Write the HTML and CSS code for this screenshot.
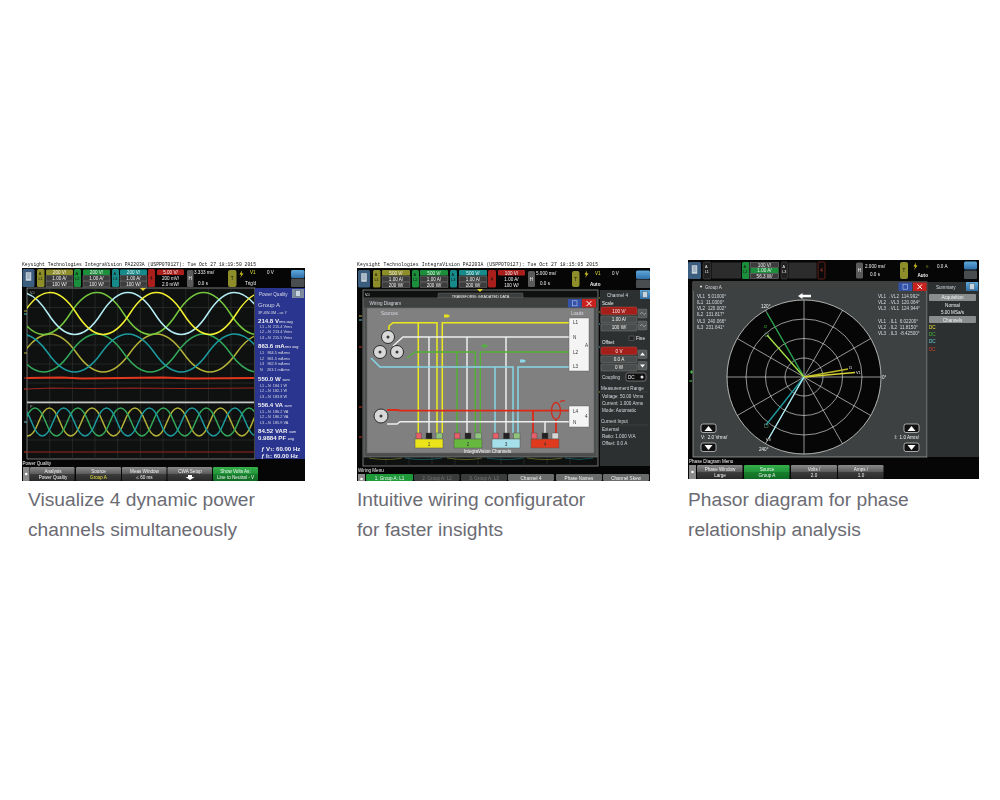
FILE: index.html
```html
<!DOCTYPE html>
<html lang="en">
<head>
<meta charset="utf-8">
<title>Power analysis views</title>
<link rel="stylesheet" href="styles.css">
</head>
<body>
<main class="gallery">

<figure class="card card-a">
<svg class="shot" width="283" height="221" viewBox="0 -2 283 221" xmlns="http://www.w3.org/2000/svg">
<defs>
<linearGradient id="key" x1="0" y1="0" x2="0" y2="1"><stop offset="0" stop-color="#8a8a8a"/><stop offset=".48" stop-color="#5c5c5c"/><stop offset=".52" stop-color="#3c3c3c"/><stop offset="1" stop-color="#2a2a2a"/></linearGradient>
<linearGradient id="keygreen" x1="0" y1="0" x2="0" y2="1"><stop offset="0" stop-color="#35b04a"/><stop offset=".48" stop-color="#22953a"/><stop offset=".52" stop-color="#17802c"/><stop offset="1" stop-color="#106a24"/></linearGradient>
<linearGradient id="btn" x1="0" y1="0" x2="0" y2="1"><stop offset="0" stop-color="#5ea9dc"/><stop offset="1" stop-color="#2f6fa8"/></linearGradient>
</defs>
<text class="mono" x="0" y="4.4" textLength="234">Keysight Technologies IntegraVision PA2203A (USPP0T0127): Tue Oct 27 18:19:50 2015</text>
<rect class="scr" x="0" y="6" width="283" height="213"/>
<rect class="menu" x="0.5" y="7" width="12" height="18" rx="1.5"/><rect class="doc" x="3.5" y="10" width="6" height="9"/><path class="docline" d="M4.7 12H8.3M4.7 14H8.3M4.7 16H8.3"/>

<rect class="c1" x="15" y="7" width="7.500" height="18" rx="1.500"/><text class="t s3 ink" x="16.800" y="13">A</text><text class="t s3 ink" x="16.500" y="18">L1</text>
<rect class="c1" x="24" y="7.500" width="27" height="5.500" rx="1"/><text class="t s4 mid" x="37.500" y="12">200 V/</text>
<rect class="read" x="24" y="13.500" width="27" height="5.500"/><text class="t s4 mid" x="37.500" y="18">1.00 A/</text>
<rect class="read" x="24" y="19.500" width="27" height="5.500"/><text class="t s4 mid" x="37.500" y="24">100 W/</text>

<rect class="c2" x="52" y="7" width="7" height="18" rx="1.500"/><text class="t s3 ink" x="53.500" y="13">A</text><text class="t s3 ink" x="53.200" y="18">L2</text>
<rect class="c2" x="61" y="7.500" width="27" height="5.500" rx="1"/><text class="t s4 mid" x="74.500" y="12">200 V/</text>
<rect class="read" x="61" y="13.500" width="27" height="5.500"/><text class="t s4 mid" x="74.500" y="18">1.00 A/</text>
<rect class="read" x="61" y="19.500" width="27" height="5.500"/><text class="t s4 mid" x="74.500" y="24">100 W/</text>

<rect class="c3" x="90" y="7" width="7" height="18" rx="1.500"/><text class="t s3 ink" x="91.500" y="13">A</text><text class="t s3 ink" x="91.200" y="18">L3</text>
<rect class="c3" x="98" y="7.500" width="27" height="5.500" rx="1"/><text class="t s4 mid" x="111.500" y="12">200 V/</text>
<rect class="read" x="98" y="13.500" width="27" height="5.500"/><text class="t s4 mid" x="111.500" y="18">1.00 A/</text>
<rect class="read" x="98" y="19.500" width="27" height="5.500"/><text class="t s4 mid" x="111.500" y="24">100 W/</text>

<rect class="c4" x="126" y="7" width="7" height="18" rx="1.500"/><text class="t s4 ink" x="128" y="17.500">4</text>
<rect class="c4" x="135" y="7.500" width="27" height="5.500" rx="1"/><text class="t s4 mid" x="148.500" y="12">5.00 V/</text>
<text class="t s4 mid" x="148.500" y="18">200 mV/</text><text class="t s4 mid" x="148.500" y="24">2.0 mW/</text>

<rect class="hbtn" x="165" y="8" width="6.500" height="17" rx="1.500"/><text class="t s4 mid" x="168.200" y="18">H</text>
<text class="t s4" x="172" y="12">3.333 ms/</text><text class="t s4" x="176" y="23">0.0 s</text>
<rect class="c1" x="206" y="8" width="8.500" height="17" rx="2"/><text class="t s4 mid ink" x="210.200" y="18">T</text>
<path class="flash" d="M220 8.500L217.500 12.500H219.500L218 16L221.500 11.500H219.500Z"/>
<text class="t s4 tyellow" x="228" y="12">V1</text><text class="t s4" x="245" y="12">0 V</text><text class="t s4" x="223" y="23">Trig'd</text>
<rect x="269" y="8" width="13.500" height="8" rx="1.500" fill="url(#btn)"/><rect class="gbtn" x="269" y="16.500" width="13.500" height="8.500" rx="1"/>

<rect class="frame" x="5" y="26" width="228" height="171"/>
<path class="grid" d="M27.700 27V197M50.400 27V197M73 27V197M95.700 27V197M118.400 27V197M141 27V197M163.700 27V197M186.400 27V197M209 27V197M5 45.500H232M5 64H232M5 83H232M5 102H232M5 121H232M5 159H232M5 178H232"/>
<svg x="5" y="27" width="227" height="113" viewBox="5 27 227 113">
<path class="w w-olive" d="M1.300 91q26.700 -38 53.300 0t53.300 0t53.300 0t53.300 0t53.300 0"/>
<path class="w w-dgreen" d="M-5 91q26.700 38 53.300 0t53.300 0t53.300 0t53.300 0t53.300 0"/>
<path class="w w-teal" d="M-27.300 91q26.700 -38 53.300 0t53.300 0t53.300 0t53.300 0t53.300 0t53.300 0"/>
<path class="w w-green" d="M-5 51.500q26.700 42 53.300 0t53.300 0t53.300 0t53.300 0t53.300 0"/>
<path class="w w-cyan" d="M-27.300 51.500q26.700 -42 53.300 0t53.300 0t53.300 0t53.300 0t53.300 0t53.300 0"/>
<path class="w w-yellow" d="M1.300 51.500q26.700 -42 53.300 0t53.300 0t53.300 0t53.300 0t53.300 0"/>
<path class="w w-red" d="M5 116L40 115.500L60 116.500L100 116L140 115.500L170 116.500L232 116"/>
<path class="w w-dred" d="M5 127L30 126L70 126.500L110 126L160 126.500L232 126"/>
</svg>
<rect class="rule" x="5" y="139.500" width="227" height="1.800"/>
<svg x="5" y="141" width="227" height="56" viewBox="5 141 227 56">
<path class="w w-olive" d="M-4.800 160q10.700 28 21.400 0t21.400 0t21.400 0t21.400 0t21.400 0t21.400 0t21.400 0t21.400 0t21.400 0t21.400 0t21.400 0t21.400 0"/>
<path class="w w-dgreen" d="M2.300 160q10.700 -28 21.400 0t21.400 0t21.400 0t21.400 0t21.400 0t21.400 0t21.400 0t21.400 0t21.400 0t21.400 0t21.400 0"/>
<path class="w w-teal" d="M-11.800 160q10.700 -28 21.400 0t21.400 0t21.400 0t21.400 0t21.400 0t21.400 0t21.400 0t21.400 0t21.400 0t21.400 0t21.400 0t21.400 0"/>
<path class="w w-dred" d="M5 190H232"/>
</svg>
<path class="mark-o" d="M2 49H5M2 91H5"/><path class="mark-c" d="M2 52H5M2 160H5"/><path class="mark-r" d="M2 116H5M2 127H5M2 190H5"/>
<path class="flash" d="M118 26H124L121 29Z"/>
<text class="t s3 tgrey" x="8" y="32">V-I</text><text class="t s3 tgrey" x="8" y="146">P</text>

<rect class="blue" x="233" y="26" width="50" height="171"/>
<text class="t s4 tsoft" x="237" y="33.500">Power Quality</text>
<rect class="gbtn2" x="270" y="27" width="12" height="9"/><rect class="doc" x="273.500" y="28.500" width="5" height="6"/>
<text class="t s6 tsoft" x="236" y="45">Group A</text>
<text class="t s3 tsoft" x="236" y="52">3P-6W-3M - as Y</text>
<text class="t s7 b" x="236" y="61">214.8 V<tspan class="s3 reg">rms avg</tspan></text>
<text class="t s3 tsoft" x="238" y="65.500">L1→N  215.4 Vrms</text>
<text class="t s3 tsoft" x="238" y="71">L2→N  213.4 Vrms</text>
<text class="t s3 tsoft" x="238" y="76.500">L3→N  215.5 Vrms</text>
<text class="t s7 b" x="236" y="85.500">863.6 mA<tspan class="s3 reg">rms avg</tspan></text>
<text class="t s3 tsoft" x="238" y="92">L1   864.5 mArms</text>
<text class="t s3 tsoft" x="238" y="97.800">L2   861.5 mArms</text>
<text class="t s3 tsoft" x="238" y="103.200">L3   862.9 mArms</text>
<text class="t s3 tsoft" x="238" y="108.500">N    263.1 mArms</text>
<text class="t s7 b" x="236" y="118.500">550.0 W <tspan class="s3 reg">sum</tspan></text>
<text class="t s3 tsoft" x="238" y="125">L1→N  184.1 W</text>
<text class="t s3 tsoft" x="238" y="130.300">L2→N  182.1 W</text>
<text class="t s3 tsoft" x="238" y="136">L3→N  183.8 W</text>
<text class="t s7 b" x="236" y="144.500">556.4 VA <tspan class="s3 reg">sum</tspan></text>
<text class="t s3 tsoft" x="238" y="151">L1→N  186.2 VA</text>
<text class="t s3 tsoft" x="238" y="156.300">L2→N  186.2 VA</text>
<text class="t s3 tsoft" x="238" y="162">L3→N  185.9 VA</text>
<text class="t s7 b" x="236" y="170.500">84.52 VAR <tspan class="s3 reg">sum</tspan></text>
<text class="t s7 b" x="236" y="178">0.9884 PF <tspan class="s3 reg">avg</tspan></text>
<text class="t s7 b" x="239" y="188.500"><tspan class="ital">ƒ</tspan> V<tspan class="s3">1</tspan>: 60.00 Hz</text>
<text class="t s7 b" x="239" y="196"><tspan class="ital">ƒ</tspan> I<tspan class="s3">1</tspan>: 60.00 Hz</text>

<text class="t s4" x="0.500" y="203">Power Quality</text>
<rect class="tiny" x="1" y="205" width="6.500" height="14"/><circle class="dot" cx="4.200" cy="212" r="1.300"/>
<rect x="8" y="205" width="44.500" height="14" rx="1.200" fill="url(#key)"/><text class="t s4 mid" x="31" y="210.500">Analysis</text><text class="t s4 mid" x="31" y="217">Power Quality</text>
<rect x="54" y="205" width="45" height="14" rx="1.200" fill="url(#key)"/><text class="t s4 mid" x="76.500" y="210.500">Source</text><text class="t s4 mid tyellow" x="76.500" y="217">Group A</text>
<rect x="100" y="205" width="44.500" height="14" rx="1.200" fill="url(#key)"/><text class="t s4 mid" x="122.500" y="210.500">Meas Window</text><text class="t s4 mid" x="122.500" y="217">≤ 60 ms</text>
<rect x="145.500" y="205" width="44.500" height="14" rx="1.200" fill="url(#key)"/><text class="t s4 mid" x="168" y="210.500">CWA Setup</text><path class="arrow" d="M166 213H170V215H172.500L168 218L163.500 215H166Z"/>
<rect x="191" y="205" width="45" height="14" rx="1.200" fill="url(#keygreen)"/><text class="t s4 mid" x="213.500" y="210.500">Show Volts As:</text><text class="t s4 mid" x="213.500" y="217">Line to Neutral - V</text>
</svg>
<figcaption class="caption caption-inset">Visualize 4 dynamic power<br>channels simultaneously</figcaption>
</figure>

<figure class="card card-b">
<svg class="shot" width="293" height="221" viewBox="0 -2 293 221" xmlns="http://www.w3.org/2000/svg">
<text class="mono" x="0" y="4.400" textLength="241">Keysight Technologies IntegraVision PA2203A (USPP0T0127): Tue Oct 27 18:15:05 2015</text>
<rect class="scr" x="0" y="6" width="293" height="213"/>
<rect class="menu" x="1" y="8" width="12" height="17.500" rx="1.500"/><rect class="doc" x="4" y="11" width="6" height="9"/><path class="docline" d="M5.200 13H8.800M5.200 15H8.800M5.200 17H8.800"/>

<rect class="c1" x="16" y="8" width="7.500" height="17.500" rx="1.500"/><text class="t s3 ink" x="17.800" y="14">A</text><text class="t s3 ink" x="17.500" y="19">L1</text>
<rect class="c1" x="25" y="8" width="28" height="5.500" rx="1"/><text class="t s4 mid" x="39" y="12.500">500 V/</text>
<rect class="read" x="25" y="14" width="28" height="5.500"/><text class="t s4 mid" x="39" y="18.500">1.00 A/</text>
<rect class="read" x="25" y="20" width="28" height="5.500"/><text class="t s4 mid" x="39" y="24.500">200 W/</text>

<rect class="c2" x="55" y="8" width="7" height="17.500" rx="1.500"/><text class="t s3 ink" x="56.500" y="14">A</text><text class="t s3 ink" x="56.200" y="19">L2</text>
<rect class="c2" x="63" y="8" width="28" height="5.500" rx="1"/><text class="t s4 mid" x="77" y="12.500">500 V/</text>
<rect class="read" x="63" y="14" width="28" height="5.500"/><text class="t s4 mid" x="77" y="18.500">1.00 A/</text>
<rect class="read" x="63" y="20" width="28" height="5.500"/><text class="t s4 mid" x="77" y="24.500">200 W/</text>

<rect class="c3" x="93" y="8" width="7" height="17.500" rx="1.500"/><text class="t s3 ink" x="94.500" y="14">A</text><text class="t s3 ink" x="94.200" y="19">L3</text>
<rect class="c3" x="102" y="8" width="28" height="5.500" rx="1"/><text class="t s4 mid" x="116" y="12.500">500 V/</text>
<rect class="read" x="102" y="14" width="28" height="5.500"/><text class="t s4 mid" x="116" y="18.500">1.00 A/</text>
<rect class="read" x="102" y="20" width="28" height="5.500"/><text class="t s4 mid" x="116" y="24.500">200 W/</text>

<rect class="c4" x="131" y="8" width="8" height="17.500" rx="1.500"/><text class="t s4 ink" x="133.500" y="18.500">4</text>
<rect class="c4" x="141" y="8" width="27" height="5.500" rx="1"/><text class="t s4 mid" x="154.500" y="12.500">100 V/</text>
<text class="t s4 mid" x="154.500" y="18.500">1.00 A/</text><text class="t s4 mid" x="154.500" y="24.500">100 W/</text>

<rect class="hbtn" x="171" y="9" width="7" height="16" rx="1.500"/><text class="t s4 mid" x="174.500" y="18.500">H</text>
<text class="t s4" x="179" y="12.500">5.000 ms/</text><text class="t s4" x="183" y="23">0.0 s</text>
<rect class="c1" x="215" y="9" width="7.500" height="16" rx="2"/><text class="t s4 mid ink" x="218.700" y="18.500">T</text>
<path class="flash" d="M230 8.500L227.500 12.500H229.500L228 16L231.500 11.500H229.500Z"/>
<text class="t s4 tyellow" x="238" y="12.500">V1</text><text class="t s4" x="255" y="12.500">0 V</text><text class="t s4 b" x="233" y="23.500">Auto</text>
<rect x="279" y="8.500" width="14" height="8.500" rx="1.500" fill="url(#btn)"/><rect class="gbtn" x="279" y="17.500" width="14" height="8.500" rx="1"/>

<rect class="frame" x="6" y="28" width="235" height="176"/>
<path class="mark-o" d="M2 54H5M242 36H244M242 50H244M242 130H244"/><path class="mark-c" d="M2 58H5M242 62H244M242 85H244"/><path class="mark-r" d="M2 85H5M2 145H5M2 175H5"/>
<path class="flash" d="M120 27H126L123 30Z"/>
<text class="t s3" x="8" y="34">V-I</text>
<rect class="tab" x="81" y="31" width="85" height="6" rx="1"/><text class="t s3 mid" x="123.500" y="35.500">TRANSFORM: GRADATED DATA</text>

<path class="grid" d="M29 195V204M52 195V204M75 195V204M98 195V204M121 195V204M144 195V204M167 195V204M190 195V204M213 195V204"/>
<path class="strip-o" d="M12 196Q30 199 45 196M90 196Q110 199 125 196M170 196Q190 199 205 196"/><path class="strip-c" d="M48 196Q65 199 85 196M130 196Q150 199 166 196M208 196Q222 199 236 196"/>

<rect class="dlg" x="7" y="36" width="233" height="159"/>
<rect class="dlgbar" x="7" y="36" width="233" height="9.500"/>
<text class="t s4 tsoft" x="12.500" y="42.500">Wiring Diagram</text>
<rect class="wbtn-b" x="211" y="37" width="13.500" height="8.500"/><rect class="docb" x="215.500" y="38.800" width="4.500" height="5"/>
<rect class="wbtn-r" x="225" y="37" width="14" height="8.500"/><path class="x" d="M229.500 39L234.500 44M234.500 39L229.500 44"/>
<rect class="pane" x="10" y="46" width="227" height="145"/>
<text class="t s4 tsoft" x="24" y="52.500">Sources</text><text class="t s4 tsoft" x="214" y="52.500">Loads</text>

<path class="wire wire-y" d="M32 68V64L36 60.700H80V171M61.300 60.700V171M85.300 171V60.700H212"/>
<path class="wire wire-w" d="M36 84L46 75H212M72 75V171M110 75V171M149 75V171"/>
<path class="wire wire-g" d="M50 96L58 90H118.300V171M123.300 171V90H212M100 90V171"/>
<path class="wire wire-c" d="M14 96L23 105H156V171M138 105V171M161 171V105H212"/>
<path class="tagy" d="M87 52.500H91L93 54L91 55.500H87Z"/><path class="tagg" d="M125 82.500H129L131 84L129 85.500H125Z"/><path class="tagc" d="M163 97.500H167L169 99L167 100.500H163Z"/>

<circle class="src" cx="31" cy="75" r="6.500"/><circle class="core" cx="31" cy="75" r="1.500"/>
<circle class="src" cx="23" cy="90" r="6.500"/><circle class="core" cx="23" cy="90" r="1.500"/>
<circle class="src" cx="40" cy="90" r="6.500"/><circle class="core" cx="40" cy="90" r="1.500"/>

<rect class="load" x="212" y="56" width="20" height="53"/>
<text class="t s4 tink" x="216" y="62">L1</text><text class="t s4 tink" x="216" y="77">N</text><text class="t s4 tink" x="228" y="85">A</text><text class="t s4 tink" x="216" y="92">L2</text><text class="t s4 tink" x="216" y="106">L3</text>

<path class="wire wire-r" d="M30 148H40L43 148.700H212M176 149V171M199 158V171"/>
<path class="wire wire-w" d="M30 162H40L43 159.700H212M188 160V171"/>
<ellipse class="coil" cx="199" cy="149" rx="4.500" ry="8.500"/><path class="coil" d="M203 140Q205 138 208 139"/>
<circle class="src" cx="24" cy="154" r="7"/><circle class="core" cx="24" cy="154" r="1.500"/>
<rect class="load" x="212" y="144" width="20" height="21"/>
<text class="t s4 tink" x="216" y="151">L4</text><text class="t s4 tink" x="228" y="156">4</text><text class="t s4 tink" x="216" y="162">N</text>

<rect class="term-r" x="59" y="171" width="5.500" height="6"/><rect class="term-k" x="69" y="171" width="6" height="6"/><rect class="term-g" x="79" y="171" width="6.500" height="6"/>
<rect class="chy" x="58" y="177" width="28" height="9"/><text class="t s4 mid tink" x="72" y="183.500">1</text>
<rect class="term-r" x="97.500" y="171" width="5.500" height="6"/><rect class="term-k" x="108" y="171" width="6" height="6"/><rect class="term-g" x="118" y="171" width="6.500" height="6"/>
<rect class="chg" x="97" y="177" width="28" height="9"/><text class="t s4 mid tink" x="111" y="183.500">2</text>
<rect class="term-r" x="136" y="171" width="5.500" height="6"/><rect class="term-k" x="146.500" y="171" width="6" height="6"/><rect class="term-g" x="156.500" y="171" width="6.500" height="6"/>
<rect class="chc" x="135" y="177" width="28" height="9"/><text class="t s4 mid tink" x="149" y="183.500">3</text>
<rect class="term-r" x="174.500" y="171" width="5.500" height="6"/><rect class="term-k" x="185" y="171" width="6" height="6"/><rect class="term-w" x="195" y="171" width="6.500" height="6"/>
<rect class="chr" x="174" y="177" width="28" height="9"/><text class="t s4 mid tink" x="188" y="183.500">4</text>
<text class="t s4 mid" x="130.500" y="190.500">IntegraVision Channels</text>

<rect class="panel" x="243" y="28" width="50" height="176"/>
<text class="t s4 tsoft" x="250" y="34.500">Channel 4</text>
<rect x="283" y="28" width="10" height="9" fill="url(#btn)"/><rect class="doc" x="285.500" y="29.500" width="5" height="6"/>
<text class="t s4" x="245" y="42.500">Scale</text>
<rect class="rd" x="244" y="45" width="36" height="7.500" rx="1.500"/><text class="t s4 mid" x="262" y="50.500">100 V/</text>
<rect class="grey" x="244" y="54" width="36" height="7" rx="1"/><text class="t s4 mid" x="262" y="59">1.00 A/</text>
<rect class="grey" x="244" y="62" width="36" height="7" rx="1"/><text class="t s4 mid" x="262" y="67">100 W/</text>
<rect class="btng" x="281" y="47" width="9" height="9" rx="1"/><path class="sq" d="M283 52Q285 49 286 51.500T289 51"/>
<rect class="btng" x="281" y="59" width="9" height="9" rx="1"/><path class="sq" d="M283 64Q285 61 286 63.500T289 63"/>
<rect class="chk" x="272" y="74" width="5" height="4.500"/><text class="t s4" x="279" y="78">Fine</text>
<text class="t s4" x="245" y="82">Offset</text>
<rect class="rd" x="244" y="85" width="36" height="7.500" rx="1.500"/><text class="t s4 mid" x="262" y="90.500">0 V</text>
<rect class="grey" x="244" y="94" width="36" height="6.500" rx="1"/><text class="t s4 mid" x="262" y="99">0.0 A</text>
<rect class="grey" x="244" y="102" width="36" height="7" rx="1"/><text class="t s4 mid" x="262" y="107">0 W</text>
<rect class="btng" x="281" y="88" width="9" height="8.500" rx="1"/><path class="arrow" d="M283 93.500L285.500 90.500L288 93.500Z"/>
<rect class="btng" x="281" y="99.500" width="9" height="8.500" rx="1"/><path class="arrow" d="M283 102.500H288L285.500 105.500Z"/>
<text class="t s4 tsoft" x="245" y="116.500">Coupling</text>
<rect class="ddl" x="269" y="111" width="20" height="8" rx="2"/><text class="t s4" x="271" y="116.800">DC</text><circle class="dotw" cx="285" cy="115" r="1.500"/>
<text class="t s4 tsoft" x="244" y="127.500">Measurement Range</text><path class="sep" d="M244 130H291M244 163H291"/>
<text class="t s4 tsoft" x="245" y="135.500">Voltage: 50.00 Vrms</text>
<text class="t s4 tsoft" x="245" y="142.500">Current: 1.000 Arms</text>
<text class="t s4 tsoft" x="245" y="149.500">Mode: Automatic</text>
<text class="t s4 tsoft" x="244" y="160.500">Current Input</text>
<text class="t s4 tsoft" x="245" y="168.500">External</text>
<text class="t s4 tsoft" x="245" y="175.500">Ratio: 1.000 V/A</text>
<text class="t s4 tsoft" x="245" y="182.500">Offset: 0.0 A</text>

<text class="t s4" x="1" y="209.500">Wiring Menu</text>
<rect class="tiny" x="1" y="212" width="7" height="7"/><circle class="dot" cx="4.500" cy="217" r="1.300"/>
<rect class="keyg" x="9" y="212" width="47" height="7" rx="1.200"/><text class="t s4 mid" x="32.500" y="217.500">1. Group A: L1</text>
<rect class="keyd" x="57" y="212" width="45.500" height="7" rx="1.200"/><text class="t s4 mid tdim" x="80" y="217.500">2. Group A: L2</text>
<rect class="keyd" x="104" y="212" width="46" height="7" rx="1.200"/><text class="t s4 mid tdim" x="127" y="217.500">3. Group A: L3</text>
<rect class="keym" x="151" y="212" width="46" height="7" rx="1.200"/><text class="t s4 mid" x="174" y="217.500">Channel 4</text>
<rect class="keym" x="199" y="212" width="46" height="7" rx="1.200"/><text class="t s4 mid" x="222" y="217.500">Phase Names</text>
<rect class="keym" x="246" y="212" width="46" height="7" rx="1.200"/><text class="t s4 mid" x="269" y="217.500">Channel Skew</text>
</svg>
<figcaption class="caption">Intuitive wiring configurator<br>for faster insights</figcaption>
</figure>

<figure class="card card-c">
<svg class="shot" width="291" height="221" viewBox="0 0 291 221" xmlns="http://www.w3.org/2000/svg">
<rect class="scr" x="0" y="0" width="291" height="219"/>
<rect class="menu" x="0" y="2" width="13" height="17" rx="1.500"/><rect class="doc" x="3.500" y="5" width="6" height="9"/><path class="docline" d="M4.700 7H8.300M4.700 9H8.300M4.700 11H8.300"/>
<rect class="off" x="15" y="2" width="8" height="17" rx="1.500"/><text class="t s3" x="17" y="8">A</text><text class="t s3" x="16.700" y="13">L1</text>
<rect class="blank" x="24" y="2.500" width="29" height="16"/>
<rect class="c2" x="54" y="2" width="7.500" height="17" rx="1.500"/><text class="t s3 ink" x="55.500" y="8">A</text><text class="t s3 ink" x="55.200" y="13">L2</text>
<rect class="blank" x="61" y="2.500" width="30" height="16"/>
<rect class="read" x="62.500" y="2.500" width="28" height="5"/><text class="t s4 mid" x="76.500" y="6.800">100 V/</text>
<rect class="c2" x="62.500" y="8" width="28" height="5"/><text class="t s4 mid" x="76.500" y="12.300">1.00 A/</text>
<rect class="read" x="62.500" y="13.500" width="28" height="5"/><text class="t s4 mid" x="76.500" y="17.800">56.3 W/</text>
<rect class="off" x="93" y="2" width="6.500" height="17" rx="1.500"/><text class="t s3" x="94.500" y="8">A</text><text class="t s3" x="94.200" y="13">L3</text>
<rect class="blank" x="100.500" y="2.500" width="28" height="16"/>
<rect class="redout" x="130" y="2" width="7" height="17" rx="1.500"/><text class="t s4 mid tred" x="133.500" y="12">4</text>
<rect class="hbtn" x="168" y="2.500" width="7" height="16" rx="1.500"/><text class="t s4 mid" x="171.500" y="12">H</text>
<text class="t s4" x="177" y="8">2.000 ms/</text><text class="t s4" x="182" y="16">0.0 s</text>
<rect class="c1" x="212" y="2" width="8" height="17" rx="2"/><text class="t s4 mid ink" x="216" y="12">T</text>
<path class="flash" d="M228 2.500L225.500 6.500H227.500L226 10L229.500 5.500H227.500Z"/>
<text class="t s3 tolive" x="238" y="7.500">B</text><text class="t s4" x="249" y="8">0.0 A</text><text class="t s4 b" x="229.500" y="16.500">Auto</text>
<rect x="276" y="1.500" width="13" height="8" rx="1.500" fill="url(#btn)"/><rect class="gbtn" x="276" y="10.500" width="13" height="8.500" rx="1"/>

<rect class="winbg" x="5" y="22" width="234" height="175"/>
<rect class="dlgbar" x="5" y="22" width="234" height="9"/>
<text class="t s4 tsoft" x="17" y="28.500">Group A</text><circle class="dotw" cx="13" cy="26.500" r="1"/>
<rect class="wbtn-b" x="210.500" y="22.500" width="13.500" height="8.500"/><rect class="docb" x="215" y="24.200" width="4.500" height="5"/>
<rect class="wbtn-r" x="225" y="22.500" width="13.500" height="8.500"/><path class="x" d="M229.500 24.500L234 29M234 24.500L229.500 29"/>

<circle class="disc" cx="116" cy="117" r="77"/>
<circle class="ring" cx="116" cy="117" r="58"/><circle class="ring" cx="116" cy="117" r="38.500"/><circle class="ring" cx="116" cy="117" r="19"/>
<path class="ring" d="M116 40V194M39 117H193M77.500 50.300L154.500 183.700M154.500 50.300L77.500 183.700M49.300 78.500L182.700 155.500M49.300 155.500L182.700 78.500"/>
<path class="ph ph-dg" d="M116 117L79 53"/>
<path class="ph ph-lg" d="M116 117L79 75"/><rect class="phbox" x="77" y="73" width="3.500" height="3.500"/>
<path class="ph ph-ol" d="M116 117L160 109"/>
<path class="ph ph-yl" d="M116 117L167 112.500"/>
<path class="ph ph-tl" d="M116 117L78 165"/><rect class="phbox" x="76.500" y="164" width="3.500" height="3.500"/>
<path class="ph ph-cy" d="M116 117L81 178"/>
<text class="t s3" x="161" y="109">I1</text><text class="t s3" x="168" y="114">V1</text><text class="t s3" x="78" y="180.500">V3</text><text class="t s3 tgreen" x="76" y="68">I2</text>
<text class="t s4" x="73" y="48">120°</text><text class="t s4" x="194" y="119">0°</text><text class="t s4" x="71" y="190.500">240°</text>
<path class="arrow" d="M110 36L114.500 33V34.800H123V37.200H114.500V39Z"/>
<text class="t s4 tsoft" x="9" y="38">VL1  5.01000°</text>
<text class="t s4 tsoft" x="9" y="44">IL1  11.0300°</text>
<text class="t s4 tsoft" x="9" y="50">VL2  120.002°</text>
<text class="t s4 tsoft" x="9" y="55.700">IL2  131.817°</text>
<text class="t s4 tsoft" x="9" y="62.500">VL3  240.066°</text>
<text class="t s4 tsoft" x="9" y="68.500">IL3  231.641°</text>
<text class="t s4 tsoft" x="190" y="38">VL1→VL2  114.992°</text>
<text class="t s4 tsoft" x="190" y="44">VL2→VL3  120.064°</text>
<text class="t s4 tsoft" x="190" y="50">VL3→VL1  124.944°</text>
<text class="t s4 tsoft" x="190" y="63">VL1→IL1  6.02200°</text>
<text class="t s4 tsoft" x="190" y="69">VL2→IL2  11.8150°</text>
<text class="t s4 tsoft" x="190" y="75">VL3→IL3  -8.42500°</text>

<rect class="updn" x="13" y="164" width="15" height="8.500" rx="2"/><path class="arrow" d="M16.500 171L20.500 166L24.500 171Z"/>
<text class="t s4" x="13" y="179">V:  2.0 Vrms/</text>
<rect class="updn" x="13" y="183" width="15" height="8.500" rx="2"/><path class="arrow" d="M16.500 185L20.500 190L24.500 185Z"/>
<rect class="updn" x="216" y="164" width="15" height="8.500" rx="2"/><path class="arrow" d="M219.500 171L223.500 166L227.500 171Z"/>
<text class="t s4 endt" x="231" y="179">I:  1.0 Arms/</text>
<rect class="updn" x="216" y="183" width="15" height="8.500" rx="2"/><path class="arrow" d="M219.500 185L223.500 190L227.500 185Z"/>
<path class="mark-g" d="M2 112H5M3.500 110.500V113.500"/><path class="mark-g" d="M1.500 121H4"/>

<rect class="panel" x="240" y="22" width="51" height="175"/>
<text class="t s4 tsoft" x="248" y="28.500">Summary</text>
<rect x="278" y="22" width="12" height="9" fill="url(#btn)"/><rect class="doc" x="281.500" y="23.500" width="5" height="6"/>
<rect class="barg" x="241" y="34" width="47" height="7" rx="1"/><text class="t s4 mid" x="264.500" y="39">Acquisition</text>
<text class="t s4 mid" x="264.500" y="46.500">Normal</text><text class="t s4 mid" x="264.500" y="54">5.00 MSa/s</text>
<rect class="barg" x="241" y="56" width="47" height="7" rx="1"/><text class="t s4 mid" x="264.500" y="61.500">Channels</text>
<text class="t s4 tyellow" x="241" y="69">DC</text><text class="t s4 tgreen" x="241" y="76">DC</text><text class="t s4 tcy" x="241" y="83">DC</text><text class="t s4 tred" x="241" y="91">DC</text>

<text class="t s4" x="1" y="202.500">Phase Diagram Menu</text>
<rect class="tiny" x="1" y="205" width="7" height="14"/><circle class="dot" cx="4.500" cy="212" r="1.300"/>
<rect x="9" y="205" width="45.500" height="14" rx="1.200" fill="url(#key)"/><text class="t s4 mid" x="32" y="210.500">Phase Window</text><text class="t s4 mid" x="32" y="217">Large</text>
<rect x="56" y="205" width="45.500" height="14" rx="1.200" fill="url(#keygreen)"/><text class="t s4 mid" x="79" y="210.500">Source</text><text class="t s4 mid" x="79" y="217">Group A</text>
<rect x="103" y="205" width="46" height="14" rx="1.200" fill="url(#key)"/><text class="t s4 mid" x="126" y="210.500">Volts /</text><text class="t s4 mid" x="126" y="217">2.0</text>
<rect x="150" y="205" width="45.500" height="14" rx="1.200" fill="url(#key)"/><text class="t s4 mid" x="173" y="210.500">Amps /</text><text class="t s4 mid" x="173" y="217">1.0</text>
</svg>
<figcaption class="caption">Phasor diagram for phase<br>relationship analysis</figcaption>
</figure>

</main>
</body>
</html>
```
FILE: styles.css
```css
html, body { margin: 0; padding: 0; background: #fff; }
.gallery { display: flex; height: 800px; box-sizing: border-box; padding: 260px 0 0 22px; }
.card { margin: 0; display: flex; flex-direction: column; }
.card-a { width: 283px; margin-right: 52px; }
.card-b { width: 293px; margin-right: 38px; }
.card-c { width: 291px; }
.shot { display: block; filter: blur(.35px); }
.caption { font: 19.2px/30px "Liberation Sans", Arial, sans-serif; color: #6b6b73; padding-top: 4px; white-space: nowrap; }
.caption-inset { padding-left: 6px; }

.mono { font-family: "Liberation Mono", monospace; font-size: 4.7px; fill: #111; }
.t { font-family: "Liberation Sans", Arial, sans-serif; fill: #f2f2f2; white-space: pre; }
.s3 { font-size: 3.8px; }
.s4 { font-size: 4.6px; }
.s6 { font-size: 6px; }
.s7 { font-size: 6.1px; }
.b { font-weight: 700; }
.reg { font-weight: 400; }
.ital { font-style: italic; }
.mid { text-anchor: middle; }
.endt { text-anchor: end; }
.ink { fill: #10120a; }
.tink { fill: #333; }
.tsoft { fill: #d6d9e0; }
.tgrey { fill: #aaa; }
.tdim { fill: #777; }
.tyellow { fill: #e6e23a; }
.tolive { fill: #77771c; }
.tgreen { fill: #45b83f; }
.tcy { fill: #64d2e0; }
.tred { fill: #d8402c; }

.scr { fill: #060606; }
.menu { fill: #3b5d80; }
.doc { fill: #c8d4e0; stroke: #40586e; stroke-width: .5; }
.docb { fill: none; stroke: #b9c9ea; stroke-width: .6; }
.docline { stroke: #40586e; stroke-width: .5; fill: none; }
.c1 { fill: #8d8d2a; }
.c2 { fill: #1c8f3c; }
.c3 { fill: #178b8b; }
.c4 { fill: #aa1f1c; }
.off { fill: #202020; stroke: #666; stroke-width: .4; }
.blank { fill: #2c2c2c; }
.redout { fill: #0a0a0a; stroke: #8a2a20; stroke-width: .7; }
.read { fill: #3c3c3c; stroke: #8a8a8a; stroke-width: .4; }
.hbtn { fill: #5a5a5a; }
.flash { fill: #e4d42a; }
.gbtn { fill: #4a4d50; }
.gbtn2 { fill: #7e8a9e; }

.frame { fill: #0e1110; stroke: #a0a4a0; stroke-width: .7; }
.grid { stroke: #333733; stroke-width: .6; fill: none; }
.w { fill: none; stroke-width: 1.5; }
.w-yellow { stroke: #f2f030; }
.w-green { stroke: #74c63e; }
.w-cyan { stroke: #b4ecf4; }
.w-olive { stroke: #b4b238; }
.w-dgreen { stroke: #33a85a; }
.w-teal { stroke: #1c9a9e; }
.w-red { stroke: #e2381f; stroke-width: 1.8; }
.w-dred { stroke: #9a2522; stroke-width: 1.2; }
.rule { fill: #c4c8c4; }
.mark-o { stroke: #b5b53a; stroke-width: 1.2; fill: none; }
.mark-c { stroke: #5cc2cf; stroke-width: 1.2; fill: none; }
.mark-r { stroke: #c23a28; stroke-width: 1.2; fill: none; }
.mark-g { stroke: #49c04a; stroke-width: 1.2; fill: none; }
.strip-o { stroke: #8f9030; stroke-width: .6; fill: none; }
.strip-c { stroke: #1f7f85; stroke-width: .6; fill: none; }

.blue { fill: #2a3590; }
.tiny { fill: #8a8a8a; }
.dot { fill: #fff; }
.dotw { fill: #e8e8e8; }
.arrow { fill: #fff; }

.tab { fill: #3b3e3e; stroke: #777; stroke-width: .4; }
.dlg { fill: #4b4d4d; stroke: #8a8d8d; stroke-width: .5; }
.dlgbar { fill: #3f4141; }
.wbtn-b { fill: #3451a8; }
.wbtn-r { fill: #c8211e; }
.x { stroke: #fff; stroke-width: 1; fill: none; }
.pane { fill: #808080; stroke: #626262; stroke-width: .6; }
.wire { fill: none; stroke-width: 1.5; }
.wire-y { stroke: #ecea1c; }
.wire-w { stroke: #eceeee; }
.wire-g { stroke: #53b035; }
.wire-c { stroke: #85d6e5; }
.wire-r { stroke: #dc2a18; stroke-width: 1.8; }
.tagy { fill: #e8e01c; }
.tagg { fill: #56b040; }
.tagc { fill: #8ed8e8; }
.src { fill: #d8d8d8; stroke: #2a2a2a; stroke-width: 1; }
.core { fill: #3a3a3a; }
.load { fill: #f4f4f4; stroke: #555; stroke-width: .4; }
.coil { fill: none; stroke: #d02a1a; stroke-width: 1.3; }
.term-r { fill: #e6606a; stroke: #444; stroke-width: .4; }
.term-k { fill: #222; stroke: #444; stroke-width: .4; }
.term-g { fill: #8fc47c; stroke: #444; stroke-width: .4; }
.term-w { fill: #d5d5d5; stroke: #444; stroke-width: .4; }
.chy { fill: #ece41a; stroke: #555; stroke-width: .5; }
.chg { fill: #66b83e; stroke: #555; stroke-width: .5; }
.chc { fill: #a5e0ea; stroke: #555; stroke-width: .5; }
.chr { fill: #e03a1e; stroke: #555; stroke-width: .5; }

.panel { fill: #2d3030; }
.rd { fill: #a41e1a; stroke: #d05044; stroke-width: .4; }
.grey { fill: #4a4d4d; stroke: #8a8a8a; stroke-width: .4; }
.btng { fill: #565959; stroke: #999; stroke-width: .3; }
.sq { fill: none; stroke: #ddd; stroke-width: .5; }
.chk { fill: #222; stroke: #888; stroke-width: .4; }
.ddl { fill: #111; stroke: #bbb; stroke-width: .5; }
.sep { stroke: #555; stroke-width: .4; fill: none; }
.keyg { fill: #1f9a3a; }
.keyd { fill: #3a3c3c; }
.keym { fill: #6a6c6c; }

.winbg { fill: #3d4141; stroke: #a8acac; stroke-width: .7; }
.disc { fill: #060606; stroke: #d4d8d4; stroke-width: .8; }
.ring { fill: none; stroke: #d0d4d0; stroke-width: .7; }
.ph { fill: none; stroke-width: 1.4; }
.ph-dg { stroke: #1f9a46; }
.ph-lg { stroke: #a2df46; }
.ph-ol { stroke: #b8b82a; }
.ph-yl { stroke: #d4d232; }
.ph-tl { stroke: #1f9aa0; }
.ph-cy { stroke: #a8eaf2; }
.phbox { fill: none; stroke: #7fb58a; stroke-width: .4; }
.updn { fill: #111; stroke: #ddd; stroke-width: .7; }
.barg { fill: #8a8d8d; }
```
